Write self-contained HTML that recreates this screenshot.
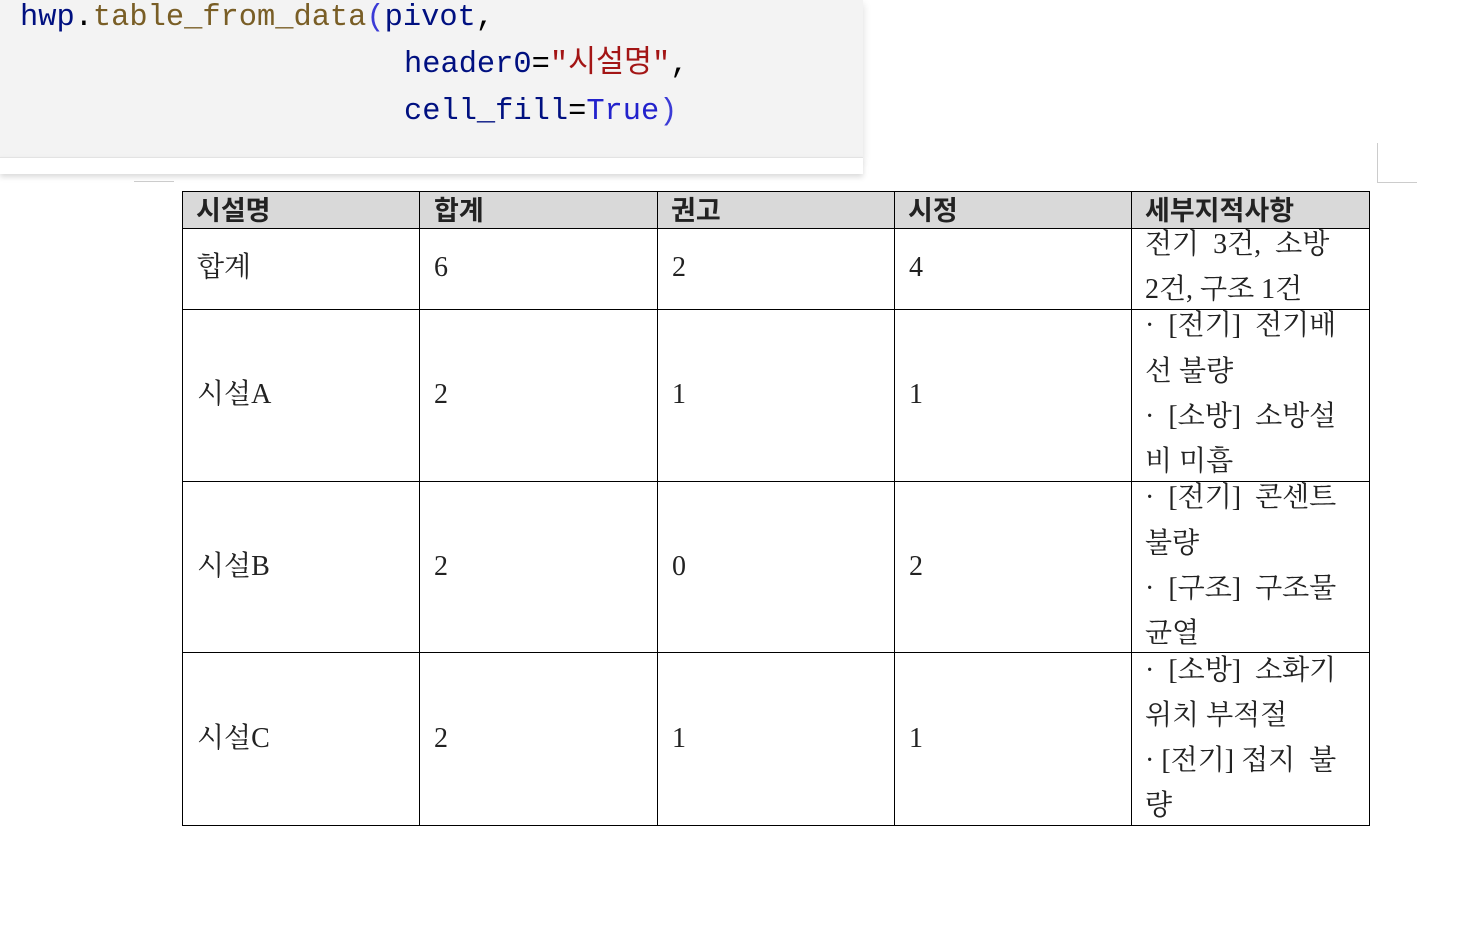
<!DOCTYPE html>
<html><head><meta charset="utf-8"><style>
body{margin:0;width:1477px;height:951px;background:#fff;position:relative;overflow:hidden}
.code{position:absolute;left:0;top:0;width:863px;height:157px;background:#f3f3f3;box-shadow:0 4px 8px rgba(0,0,0,.15)}
.strip{position:absolute;left:0;top:157px;width:863px;height:16px;background:#fff;box-shadow:0 3px 6px rgba(0,0,0,.15);border-top:1px solid #e3e3e3}
.cl{position:absolute;font-family:"Liberation Mono","Noto Sans CJK KR",monospace;font-size:31px;letter-spacing:0px;white-space:pre;color:#001080;line-height:40px;transform:scaleX(0.98);transform-origin:left}
.f{color:#795e26}.p{color:#3b3bd6}.s{color:#a31515}.k{color:#2222cc}.o{color:#000}
.v{position:absolute;background:#000;width:1px}
.h{position:absolute;background:#000;height:1px}
.t{position:absolute;font-family:"Liberation Serif","Noto Serif CJK SC",serif;font-size:28px;color:#222;white-space:pre;line-height:45px}
.b{font-family:"Noto Sans CJK KR",sans-serif;font-weight:bold;font-size:27px;line-height:36px}
</style></head><body>
<div class="code"></div>
<div class="strip"></div>
<div class="cl" style="left:20px;top:-2px">hwp<span class="o">.</span><span class="f">table_from_data</span><span class="p">(</span>pivot<span class="o">,</span></div>
<div class="cl" style="left:404px;top:45px">header0<span class="o">=</span><span class="s">"시설명"</span><span class="o">,</span></div>
<div class="cl" style="left:404px;top:92px">cell_fill<span class="o">=</span><span class="k">True</span><span class="p">)</span></div>
<div style="position:absolute;left:134px;top:181px;width:40px;height:1px;background:#ccc"></div>
<div style="position:absolute;left:1377px;top:143px;width:1px;height:40px;background:#ccc"></div>
<div style="position:absolute;left:1377px;top:182px;width:40px;height:1px;background:#ccc"></div>
<div style="position:absolute;left:182px;top:191px;width:1188px;height:37px;background:#d9d9d9"></div>
<div class="v" style="left:182px;top:191px;height:635px"></div>
<div class="v" style="left:419px;top:191px;height:635px"></div>
<div class="v" style="left:657px;top:191px;height:635px"></div>
<div class="v" style="left:894px;top:191px;height:635px"></div>
<div class="v" style="left:1131px;top:191px;height:635px"></div>
<div class="v" style="left:1369px;top:191px;height:635px"></div>
<div class="h" style="left:182px;top:191px;width:1188px"></div>
<div class="h" style="left:182px;top:228px;width:1188px"></div>
<div class="h" style="left:182px;top:309px;width:1188px"></div>
<div class="h" style="left:182px;top:481px;width:1188px"></div>
<div class="h" style="left:182px;top:652px;width:1188px"></div>
<div class="h" style="left:182px;top:825px;width:1188px"></div>
<div class="t b" style="left:196px;top:191px">시설명</div>
<div class="t b" style="left:434px;top:191px">합계</div>
<div class="t b" style="left:671px;top:191px">권고</div>
<div class="t b" style="left:908px;top:191px">시정</div>
<div class="t b" style="left:1145px;top:191px">세부지적사항</div>
<div class="t" style="left:197px;top:245px">합계</div><div class="t" style="left:434px;top:245px">6</div><div class="t" style="left:672px;top:245px">2</div><div class="t" style="left:909px;top:245px">4</div>
<div class="t" style="left:197px;top:372px">시설A</div><div class="t" style="left:434px;top:372px">2</div><div class="t" style="left:672px;top:372px">1</div><div class="t" style="left:909px;top:372px">1</div>
<div class="t" style="left:197px;top:544px">시설B</div><div class="t" style="left:434px;top:544px">2</div><div class="t" style="left:672px;top:544px">0</div><div class="t" style="left:909px;top:544px">2</div>
<div class="t" style="left:197px;top:716px">시설C</div><div class="t" style="left:434px;top:716px">2</div><div class="t" style="left:672px;top:716px">1</div><div class="t" style="left:909px;top:716px">1</div>
<div class="t" style="left:1145px;top:222px">전기  3건,  소방</div>
<div class="t" style="left:1145px;top:267px">2건, 구조 1건</div>
<div class="t" style="left:1145px;top:303px">·  [전기]  전기배</div>
<div class="t" style="left:1145px;top:349px">선 불량</div>
<div class="t" style="left:1145px;top:394px">·  [소방]  소방설</div>
<div class="t" style="left:1145px;top:439px">비 미흡</div>
<div class="t" style="left:1145px;top:475px">·  [전기]  콘센트</div>
<div class="t" style="left:1145px;top:521px">불량</div>
<div class="t" style="left:1145px;top:566px">·  [구조]  구조물</div>
<div class="t" style="left:1145px;top:611px">균열</div>
<div class="t" style="left:1145px;top:648px">·  [소방]  소화기</div>
<div class="t" style="left:1145px;top:693px">위치 부적절</div>
<div class="t" style="left:1145px;top:738px">· [전기] 접지  불</div>
<div class="t" style="left:1145px;top:783px">량</div>
</body></html>
